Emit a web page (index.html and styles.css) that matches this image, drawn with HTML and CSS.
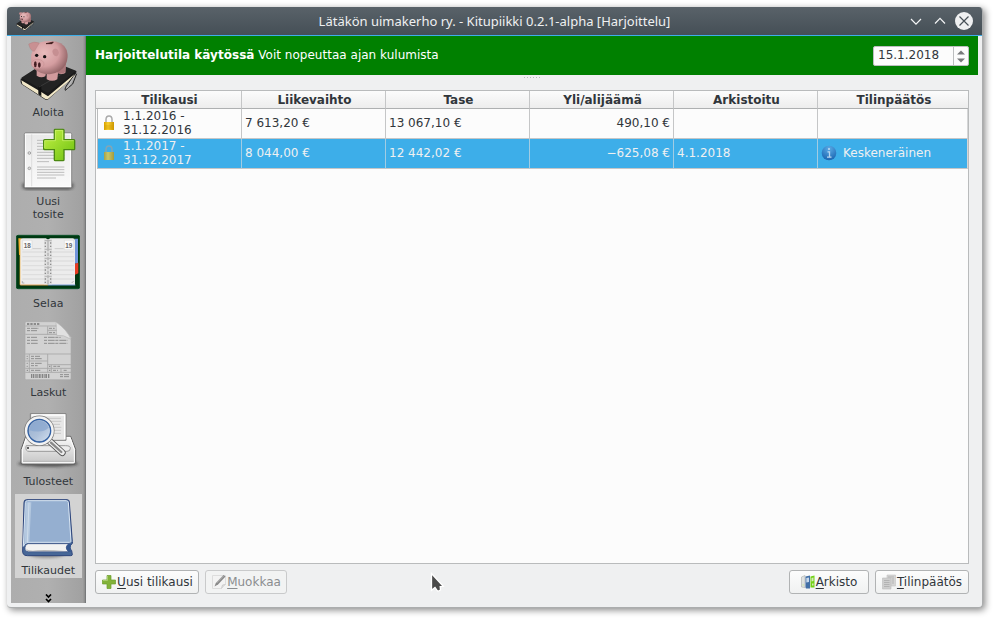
FILE: index.html
```html
<!DOCTYPE html>
<html lang="fi">
<head>
<meta charset="utf-8">
<title>Kitupiikki</title>
<link rel="stylesheet" href="styles.css">
</head>
<body>
<svg class="defs" width="0" height="0" aria-hidden="true">
  <defs>
    <radialGradient id="pig" cx=".35" cy=".35" r=".75"><stop offset="0" stop-color="#e8bcbc"/><stop offset=".55" stop-color="#d49da0"/><stop offset="1" stop-color="#835759"/></radialGradient>
    <linearGradient id="plus" x1="0" y1="0" x2="1" y2="1"><stop offset="0" stop-color="#c5f246"/><stop offset="1" stop-color="#6cc010"/></linearGradient>
    <linearGradient id="paper" x1="0" y1="0" x2="0" y2="1"><stop offset="0" stop-color="#e9e9e9"/><stop offset="1" stop-color="#fafafa"/></linearGradient>
    <linearGradient id="metal" x1="0" y1="0" x2="0" y2="1"><stop offset="0" stop-color="#fafafa"/><stop offset="1" stop-color="#c4c4c4"/></linearGradient>
    <linearGradient id="lens" x1="0" y1="0" x2="1" y2="1"><stop offset="0" stop-color="#92abcd"/><stop offset=".55" stop-color="#aec1da"/><stop offset="1" stop-color="#dbe7f4"/></linearGradient>
    <linearGradient id="gold" x1="0" y1="0" x2="1" y2="0"><stop offset="0" stop-color="#d8a200"/><stop offset=".4" stop-color="#f8cf30"/><stop offset="1" stop-color="#cc9600"/></linearGradient>
    <linearGradient id="olive" x1="0" y1="0" x2="1" y2="0"><stop offset="0" stop-color="#a6a24a"/><stop offset=".4" stop-color="#c8c66a"/><stop offset="1" stop-color="#a49c3c"/></linearGradient>
    <radialGradient id="info" cx=".5" cy=".2" r=".9"><stop offset="0" stop-color="#5aaae6"/><stop offset="1" stop-color="#135dab"/></radialGradient>
    <filter id="soft" x="-20%" y="-50%" width="140%" height="200%"><feGaussianBlur stdDeviation="4"/></filter>
    <symbol id="piggy" viewBox="48 114 192 192">
      <path d="M62 236 118 212 160 197l70 17-9 16-76 68q-6 4-12-1l-68-44q-5-5-3-17z" fill="#1a1a1a"/>
      <path d="m64 241 56 33 24 15 80-67v7l-79 67q-5 3-10 0l-68-43z" fill="#f2e8c8"/>
      <path d="m64 233 75 44q5 3 10-2l79-63-34-13-72-3z" fill="#232323"/>
      <path d="m115 260 9-5v34l-9-6z" fill="#111"/>
      <path d="M117 261l70-40" stroke="#444" stroke-width="2"/>
      <path d="m230 221-12 31-22 19q-3-6 7-19l25-34" fill="none" stroke="#222" stroke-width="3"/>
      <path d="m222 229-20 36" stroke="#c8c8c8" stroke-width="2"/>
      <path d="M110 202v25q13 9 26 2l4-17v26q17 9 32 0l2-18q12 5 22-1l2-40z" fill="#d19a9c"/>
      <path d="M172 218q15 6 24-2l4-47q-12 22-28 31z" fill="#ab777a"/>
      <path d="M103 139q15-16 47-16 39 0 50 27 7 23-3 43-13 26-48 30-28 0-47-17-12-18-8-43z" fill="url(#pig)"/>
      <path d="M86 132q16-10 32-3l-15 25q-12 0-17-22z" fill="#c99092" stroke="#a8787a"/>
      <path d="M157 153q4-11 14-6 11 10 1 21-13 3-15-15z" fill="#c68f92"/>
      <ellipse cx="113" cy="192" rx="19" ry="14" fill="#d9a3a6" stroke="#b98286"/>
      <ellipse cx="106" cy="193" rx="4" ry="9" fill="#431e22"/><ellipse cx="118" cy="195" rx="4" ry="8" fill="#431e22"/>
      <circle cx="110" cy="166" r="5" fill="#111"/><circle cx="134" cy="170" r="5" fill="#111"/>
      <path d="m138 131 22-5-4 5z" fill="#311" stroke="#311" stroke-width="2"/>
    </symbol>
  </defs>
</svg>
<div class="window">
  <header class="titlebar">
    <svg class="app-icon"><use href="#piggy"/></svg>
    <h1>Lätäkön uimakerho ry. - Kitupiikki 0.2.1-alpha [Harjoittelu]</h1>
    <svg class="controls" viewBox="0 0 70 20">
      <path d="m7 8 5 5.2L17 8M31 12.5 36 7.300l5 5.200" fill="none" stroke="#f3f4f5" stroke-width="1.2"/>
      <circle cx="60" cy="10" r="9" fill="#eff0f1"/>
      <path d="m55.500 5.500 9 9m0-9-9 9" stroke="#475057" stroke-width="1.200"/>
    </svg>
  </header>
  <div class="body">
    <nav class="sidebar">
      <a class="item"><svg class="icon"><use href="#piggy"/></svg><span>Aloita</span></a>
      <a class="item">
        <svg class="icon" viewBox="48 21 192 192">
          <path d="M67 190h153v12q-6 7-15 7H82q-12 0-15-8z" fill="#222" opacity=".6" filter="url(#soft)"/>
          <rect x="73" y="39" width="142" height="164" rx="4" fill="url(#paper)" stroke="#777" stroke-width="3"/>
          <rect x="76" y="42" width="136" height="158" fill="none" stroke="#fff" stroke-width="3"/>
          <path d="M95 43v156" stroke="#d1d1d1" stroke-width="2"/>
          <circle cx="88" cy="99" r="4" fill="#ddd" stroke="#888" stroke-width="2"/><circle cx="88" cy="145" r="4" fill="#ddd" stroke="#888" stroke-width="2"/>
          <path d="M111 61h82M111 70h82M111 79h82M111 88h82M111 97h82M111 106h82M111 115h82M111 125h36M111 141h82M111 149h82M111 157h82M111 165h82M111 174h57" stroke="#bcbcbc" stroke-width="3"/>
          <path d="M164 28h26q2 0 2 3v28h30q2 0 2 3v25q0 2-2 2h-30v30q0 3-3 3h-23q-3 0-3-3V89h-29q-3 0-3-3V62q0-3 3-3h29V31q0-3 1-3z" fill="url(#plus)" stroke="#4b8812" stroke-width="4"/>
          <path d="M166 31h22v31h33M134 84V62h32V31" fill="none" stroke="#d5f779" stroke-width="2"/>
        </svg><span>Uusi<br>tosite</span></a>
      <a class="item">
        <svg class="icon" viewBox="48 12 192 192">
          <rect x="49" y="31" width="190" height="160" rx="5" fill="#003812" stroke="#0b5128" stroke-width="3"/>
          <path d="M55 40h10v50h-8zM59 90h4v89h-4z" fill="#f4ae32"/>
          <path d="M224 41h10v75h-10z" fill="#7195db"/><path d="M225 116l10-3v32l-10 4z" fill="#e63b22"/>
          <path d="M61 180V45q1-5 7-5h70l6 5 6-5h68q7 0 7 6v134z" fill="#ececec"/>
          <path d="M61 180h83" stroke="#e4a458" stroke-width="3"/><path d="M144 180h82" stroke="#7b9fda" stroke-width="3"/>
          <path d="M132 42h24v136h-24z" fill="#e0e0e0"/><path d="M144 42v137" stroke="#bababa" stroke-width="5"/>
          <path d="M67 81h155M67 95h155M67 108h155M67 122h155M67 135h155M67 149h155M67 162h155" stroke="#dedede" stroke-width="4"/>
          <path d="M98 71h26M164 71h27" stroke="#ccc" stroke-width="3"/>
          <path d="M136 52v125M152 52v125" stroke="#8c8c8c" stroke-width="4" stroke-dasharray="4 6 4 13"/>
          <path d="M134 47h21M134 73h21M134 100h21M134 127h21M134 154h21" stroke="#b5b5b5" stroke-width="3"/>
          <path d="M68 46h28v28H68zM193 46h28v28h-28z" fill="#fafafa" stroke="#c5c5c5"/>
          <text class="date" x="71" y="68">18</text><text class="date" x="196" y="68">19</text>
          <path d="M67 168v6h6M221 168l-6 6" fill="none" stroke="#999" stroke-width="2"/>
        </svg><span>Selaa</span></a>
      <a class="item">
        <svg class="icon" viewBox="48 24 192 192">
          <path d="M79 35h88q20 15 46 47v123q0 4-4 4H79q-4 0-4-4V39q0-4 4-4z" fill="#d2d2d2" stroke="#aaa" stroke-width="2"/>
          <path d="m168 36 2 40q20-3 43 12-12-29-45-52z" fill="#e1e1e1" stroke="#b5b5b5" stroke-width="2"/>
          <path d="M76 48h93M76 73h94M143 49v24M143 61h27M76 132h137M76 153h67M76 175h137M76 187h137M143 132v55M88 132v55M143 164h70M154 164v22M183 176v11" stroke="#a5a5a5" stroke-width="2.500"/>
          <path d="M81 42h38" stroke="#8b8b8b" stroke-width="6" stroke-dasharray="7 3"/>
          <path d="M81 55h35M147 55h17M81 62h30M147 68h18M81 82h30M132 82h50M81 91h33M132 91h70M81 100h33M132 100h70M93 139h27M93 146h33M93 160h33M93 167h20M160 169h20M93 181h28M159 181h15M191 181h12M180 194h27M180 200h27" stroke="#8e8e8e" stroke-width="3" stroke-dasharray="9 3 20 2"/>
          <path d="M80 139h3M80 146h3M80 160h3M80 169h3M80 181h4M147 169h4M147 181h4" stroke="#8e8e8e" stroke-width="4"/>
          <path d="M93 198h55" stroke="#858585" stroke-width="12" stroke-dasharray="3 2 5 3 4 2"/>
        </svg><span>Laskut</span></a>
      <a class="item">
        <svg class="icon" viewBox="48 21 192 192">
          <ellipse cx="144" cy="191" rx="91" ry="9" fill="#222" opacity=".65" filter="url(#soft)"/>
          <path d="m77 109-14 40v39q0 5 6 5h150q8 0 8-6v-39l-15-39z" fill="url(#metal)" stroke="#606060" stroke-width="3"/>
          <path d="m80 112-13 37v38h156v-38l-13-37z" fill="none" stroke="#fff" stroke-width="3"/><path d="M69 184h152" stroke="#bbb" stroke-width="4"/>
          <path d="M79 137h118q15 0 14 8 0 9-10 9H87q-11 0-9-14z" fill="#ececec" stroke="#999" stroke-width="3"/>
          <path d="M91 41h107v80H91z" fill="#e7e7e7" stroke="#808080" stroke-width="3"/><path d="M95 45h99v72" fill="none" stroke="#fff" stroke-width="4"/>
          <path d="M133 55h50M133 64h51M141 73h39M151 82h33M158 91h25M158 100h25" stroke="#cdcdcd" stroke-width="4"/>
          <path d="m146 121 41 37" stroke="#555" stroke-width="20" stroke-linecap="round"/><path d="m147 122 40 36" stroke="#eee" stroke-width="15" stroke-linecap="round"/><path d="m153 128 31 28" stroke="#888" stroke-width="7" stroke-linecap="round"/>
          <circle cx="118" cy="92" r="39" fill="url(#lens)" stroke="#777" stroke-width="13"/><circle cx="118" cy="92" r="39" fill="none" stroke="#f3f3f3" stroke-width="9"/>
          <circle cx="118" cy="92" r="34" fill="none" stroke="#3262a7" stroke-width="4"/>
          <path d="M88 91q2-27 29-29 21 0 29 21-20 18-58 8z" fill="#87a5ce" opacity=".7"/>
          <circle cx="84" cy="144" r="3" fill="#333"/>
        </svg><span>Tulosteet</span></a>
      <a class="item selected">
        <svg class="icon" viewBox="48 18 192 192">
          <ellipse cx="140" cy="193" rx="53" ry="10" fill="#333" opacity=".45" filter="url(#soft)"/>
          <path d="M80 29h121q7 0 7 7l9 119q2 5-2 7-10 10 0 20l2 12q0 3-5 3H82q-16 0-14-17l4-143q0-8 8-8z" fill="#476797" stroke="#2e457c" stroke-width="3"/>
          <path d="M83 32h116q5 0 6 5l8 117q0 3-4 3H84q-10 1-14 12l6-131q0-6 7-6z" fill="#95afd0" stroke="#dce8f4" stroke-width="3"/>
          <path d="M79 37h15l-6 119q-10 0-15 9z" fill="#b4c8df"/><path d="M87 37l-5 119" stroke="#dbe7f2" stroke-width="2"/>
          <path d="M85 161h121q-14 12 0 24H86q-12 0-11-12 1-12 10-12z" fill="#f2f2f2" stroke="#2e457c" stroke-width="2"/>
          <path d="M78 177q9 7 34 4t91 3H84z" fill="#b7b7b7"/><path d="M206 162q-14 11 0 23h7q-4-8 1-23z" fill="#34568f"/>
        </svg><span>Tilikaudet</span></a>
      <svg class="more" viewBox="0 0 7 9"><path d="M1 .5 3.500 3 6 .5M1 5l2.500 2.500L6 5" fill="none" stroke="#000" stroke-width="1.700"/></svg>
    </nav>
    <main class="main">
      <section class="notice">
        <p><b>Harjoittelutila käytössä</b> Voit nopeuttaa ajan kulumista</p>
        <div class="spin"><span>15.1.2018</span><i><svg viewBox="0 0 14 18"><path d="m3 7.500 4-4 4 4zM3 11.500h8l-4 4z" fill="#77797b"/></svg></i></div>
      </section>
      <div class="grip"></div>
      <section class="table">
        <div class="row head"><b>Tilikausi</b><b>Liikevaihto</b><b>Tase</b><b>Yli/alijäämä</b><b>Arkistoitu</b><b>Tilinpäätös</b></div>
        <div class="row">
          <div class="period"><svg class="lock" viewBox="0 0 12 18"><path d="M3 9V5.500Q3 2 6 2t3 3.500V9" fill="none" stroke="#aaa" stroke-width="1.500"/><path d="M1 8h10v8H1z" fill="url(#gold)"/><path d="M1 12h10M1 14h10" stroke="#d19b00" stroke-width=".6"/></svg><span>1.1.2016 -<br>31.12.2016</span></div>
          <div>7 613,20 €</div><div>13 067,10 €</div><div class="num">490,10 €</div><div></div><div></div>
        </div>
        <div class="row active">
          <div class="period"><svg class="lock" viewBox="0 0 12 18"><path d="M3 9V5.500Q3 2 6 2t3 3.500V9" fill="none" stroke="#82a5b5" stroke-width="1.500"/><path d="M1 8h10v8H1z" fill="url(#olive)"/></svg><span>1.1.2017 -<br>31.12.2017</span></div>
          <div>8 044,00 €</div><div>12 442,02 €</div><div class="num">−625,08 €</div><div>4.1.2018</div>
          <div><svg class="info" viewBox="0 0 16 16"><circle cx="8" cy="8" r="7.300" fill="url(#info)"/><path d="M6.500 6.800h2v5M6 12.200h4.500" fill="none" stroke="#b9d6f0" stroke-width="1.300"/><circle cx="8" cy="4" r="1.100" fill="#b9d6f0"/></svg>Keskeneräinen</div>
        </div>
      </section>
      <footer class="actions">
        <button class="new"><svg viewBox="0 0 16 16"><path d="M6 1.500h4V6h4.500v4H10v4.500H6V10H1.500V6H6z" fill="#82b239" stroke="#6c9d2b" stroke-width=".7"/><path d="M6.500 2v4.500H2" fill="none" stroke="#a8cd6c"/></svg><span><u>U</u>usi tilikausi</span></button>
        <button class="edit" disabled><svg viewBox="0 0 16 16"><path d="M1.500 1.500h13v9l-4 4h-9z" fill="#f3f3f3" stroke="#ddd"/><path d="m10.500 14.500 1-3.500 3-.5" fill="#ddd" stroke="#ccc"/><path d="m3.500 12.500 1.300-3.600L12.500 1l2 1.500-7.500 8z" fill="#898989"/><path d="m5.500 9 7-7" stroke="#bbb"/></svg><span><u>M</u>uokkaa</span></button>
        <span class="spacer"></span>
        <button class="archive"><svg viewBox="0 0 16 16"><path d="M1.500 3 5 1.500v12L1.500 13z" fill="#e0e2e0" stroke="#b5b8b5" stroke-width=".7"/><path d="M5.500 2.500 10 1.500v13H6l-.5-1z" fill="#426fa6"/><path d="m6.300 4 2.700-.5v4.500l-2.700.4z" fill="#c7d8eb"/><path d="m10.500 2.500 4-1v12h-4z" fill="#73d216"/><path d="m11.500 4 2-.4v3.500l-2 .3zM2.500 10H4v2H2.500zM12 9.500h1.500v2H12z" fill="#d5e8bb"/></svg><span><u>A</u>rkisto</span></button>
        <button class="final"><svg viewBox="0 0 16 16"><path d="M6 1h8.500v11H6z" fill="#d5d5d5" stroke="#c3c3c3" stroke-width=".6"/><path d="M1.500 4h8.500v11H1.500z" fill="#cecece" stroke="#bcbcbc" stroke-width=".6"/><path d="M3 6.500h5.500M3 8.500h5.500M3 10.500h5.500M3 12.500h5.500M7 3h6M11 5h2M11 7h2M11 9h2" stroke="#acacac" stroke-width=".8"/></svg><span><u>T</u>ilinpäätös</span></button>
      </footer>
    </main>
  </div>
</div>
<svg class="cursor" viewBox="0 0 15 22"><path d="M1.500 1.500v16.800l3.500-2.800 2.800 3.800 2.700-1.300-.3-3.500 3-.2z" fill="#4b4b4b" stroke="#fff" stroke-width="1.300"/></svg>
</body>
</html>
```

FILE: styles.css
```css
* { box-sizing: border-box; }
body {
  margin: 0;
  padding: 7px 0 0 7px;
  height: 620px;
  overflow: hidden;
  background: #fff;
  color: #31363b;
  font: 12px/14px "DejaVu Sans", sans-serif;
}
.defs { position: absolute; }
.window {
  display: flex;
  flex-direction: column;
  width: 976px;
  height: 601px;
  border-radius: 4px;
  overflow: hidden;
  background: #eff0f1;
  border-right: 1px solid #abadae;
  border-bottom: 1px solid #abadae;
  box-shadow: 2px 2px 7px rgba(0, 0, 0, .48);
}
.titlebar {
  display: flex;
  align-items: center;
  flex: none;
  height: 29px;
  padding: 0 8px;
  background: linear-gradient(#596269, #454f56);
  border-bottom: 1px solid #3daee9;
  color: #eff0f1;
}
.app-icon { width: 20px; height: 20px; }
.titlebar h1 {
  flex: 1;
  margin: 0 0 0 50px;
  text-align: center;
  font: 13px/20px "Noto Sans", sans-serif;
}
.controls { width: 70px; height: 20px; }
.body { display: flex; flex: 1; min-height: 0; padding: 0 4px 4px 4px; }
.sidebar {
  display: flex;
  flex-direction: column;
  align-items: center;
  gap: 5px;
  width: 75px;
  border-right: 1px solid #77797b;
  background: linear-gradient(90deg, #adadad, #b0b0b0 50%, #a1a1a1 97%, #8b8b8b);
  font-size: 11px;
  line-height: 13px;
}
.item {
  display: flex;
  flex-direction: column;
  align-items: center;
  gap: 4px;
  width: 67px;
  padding: 2px 0 1px;
  text-align: center;
}
.item span { padding-left: .5px; }
.item.selected { background: #d3d3d3; }
.icon { width: 64px; height: 64px; }
.date { font: bold 19px "Liberation Sans", sans-serif; fill: #666; }
.more { width: 7px; height: 9px; margin-top: 11px; }
.main { display: flex; flex-direction: column; flex: 1; min-width: 0; }
.notice {
  display: flex;
  align-items: center;
  justify-content: space-between;
  height: 39px;
  padding: 0 9px;
  background: #008000;
  color: #fff;
}
.notice p { margin: 0; padding-bottom: 1px; letter-spacing: .02px; }
.spin {
  display: flex;
  width: 96px;
  height: 20px;
  border: 1px solid #bcbebf;
  border-radius: 2px;
  background: #fcfcfc;
  color: #31363b;
  line-height: 17px;
}
.spin span { flex: 1; padding-left: 4px; }
.spin i { width: 15px; border-left: 1px solid #bcbebf; }
.spin svg { display: block; width: 14px; height: 18px; }
.grip {
  width: 17px;
  height: 1px;
  margin: 2px auto 12px;
  background: repeating-linear-gradient(90deg, #b8babb 0 1px, transparent 1px 3px);
}
.table {
  height: 474px;
  margin: 0 9px;
  border: 1px solid #b9bbbc;
  background: #fcfcfc;
}
.row {
  display: grid;
  grid-template-columns: 146px 144px 144px 144px 144px 1fr;
  grid-template-rows: 100%;
  height: 30px;
}
.row > * {
  display: flex;
  align-items: center;
  padding: 0 3px 2px;
  border-right: 1px solid #c5c6c7;
  border-bottom: 1px solid #c5c6c7;
}
.row > .period { gap: 8px; padding: 0 0 1px 5px; border-left: 1px solid #b9bbbc; margin-left: 1px; }
.row > .num { justify-content: flex-end; }
.row > :last-child { border-right-color: #d5d6d7; }
.head { height: 18px; background: linear-gradient(#fcfcfc, #ececec); }
.head > * { justify-content: center; padding: 0 2px 0 4px; border-bottom-color: #aeb0b1; }
.head > :last-child { border-right: 0; }
.active > * { background: #3daee9; color: #eff0f1; border-right-color: #a1cce3; }
.lock { width: 12px; height: 18px; }
.info { width: 16px; height: 16px; margin-right: 6px; }
.actions { display: flex; gap: 6px; margin: 6px 9px 0; }
.spacer { flex: 1; }
button {
  display: flex;
  align-items: center;
  justify-content: center;
  gap: 0;
  height: 24px;
  padding: 0;
  border: 1px solid #b1b3b4;
  border-radius: 3px;
  background: linear-gradient(#fcfcfc, #f0f1f1);
  color: #31363b;
  font: inherit;
}
button svg { width: 16px; height: 16px; }
button u { text-underline-offset: 2px; }
button:disabled { border-color: #c9cacb; color: #8b8d8f; background: #f2f3f3; }
.new { width: 104px; }
.edit { width: 82px; }
.archive { width: 80px; padding-right: 1px; }
.final { width: 94px; padding-right: 1px; }
.cursor { position: absolute; left: 430px; top: 572px; width: 15px; height: 22px; }
```
